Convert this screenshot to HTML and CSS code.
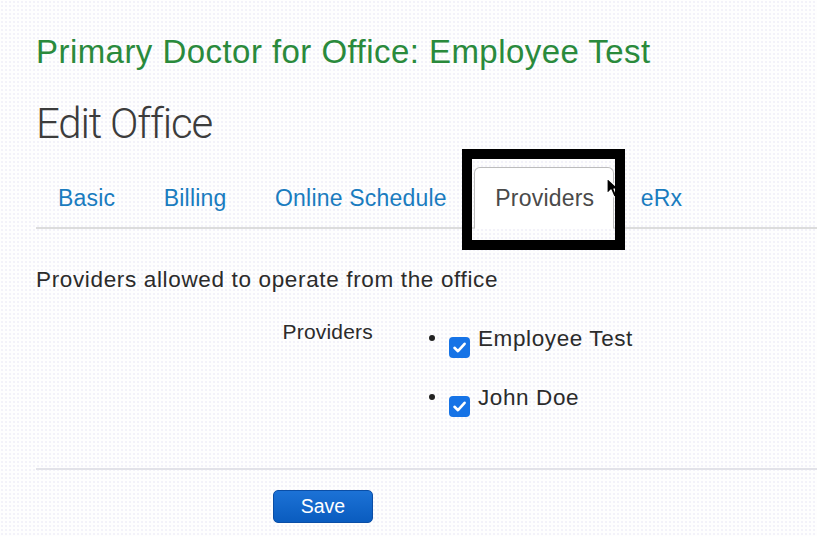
FILE: index.html
```html
<!DOCTYPE html>
<html lang="en">
<head>
<meta charset="utf-8">
<title>Edit Office</title>
<link rel="stylesheet" href="styles.css">
</head>
<body>
<div class="page">
  <h1 class="doctor">Primary Doctor for Office: Employee Test</h1>
  <h2 class="title">Edit Office</h2>
  <ul class="tabs">
    <li class="tab"><a href="#">Basic</a></li>
    <li class="tab"><a href="#">Billing</a></li>
    <li class="tab"><a href="#">Online Schedule</a></li>
    <li class="tab active"><a href="#">Providers</a></li>
    <li class="tab"><a href="#">eRx</a></li>
  </ul>
  <p class="intro">Providers allowed to operate from the office</p>
  <div class="form-row">
    <div class="label">Providers</div>
    <ul class="providers">
      <li class="provider"><span class="bullet"></span><span class="check"><svg viewBox="0 0 21 21" width="21" height="21"><path d="M5.5 10.8 L9 14.2 L15.6 6.8" fill="none" stroke="#fff" stroke-width="2.6" stroke-linecap="round" stroke-linejoin="round"/></svg></span>Employee Test</li>
      <li class="provider"><span class="bullet"></span><span class="check"><svg viewBox="0 0 21 21" width="21" height="21"><path d="M5.5 10.8 L9 14.2 L15.6 6.8" fill="none" stroke="#fff" stroke-width="2.6" stroke-linecap="round" stroke-linejoin="round"/></svg></span>John Doe</li>
    </ul>
  </div>
  <div class="divider"></div>
  <div class="actions"><button class="save">Save</button></div>

  <div class="cursor"><svg viewBox="0 0 14 22" width="14" height="22"><path d="M1 1 L1 17 L5 13 L8 20 L11 19 L8 12 L13 12 Z" fill="#000" stroke="#fff" stroke-width="1.2" stroke-linejoin="round"/></svg></div>
  <div class="highlight"></div>
</div>
</body>
</html>
```
FILE: styles.css
```css
html, body {
  margin: 0;
  padding: 0;
}
body {
  background-color: #fefefe;
  background-image: radial-gradient(circle, #ecebf6 0.6px, transparent 0.9px);
  background-size: 4px 4px;
  font-family: "Liberation Sans", Arial, Helvetica, sans-serif;
  color: #333;
}
.page {
  position: relative;
  width: 817px;
  height: 536px;
  overflow: hidden;
  padding-left: 36px;
  box-sizing: border-box;
}
.doctor {
  margin: 33px 0 0;
  font-size: 33px;
  line-height: 38px;
  font-weight: normal;
  color: #2a8a3c;
  letter-spacing: 0.45px;
}
.title {
  margin: 29px 0 0;
  font-family: Roboto, "Liberation Sans", sans-serif;
  font-weight: 300;
  font-size: 42px;
  line-height: 48px;
  color: #3c3c3c;
  letter-spacing: -1.2px;
}
.tabs {
  list-style: none;
  margin: 19px 0 0;
  padding: 0;
  display: flex;
  border-bottom: 2px solid #dcdcdc;
}
.tab {
  margin: 0 4.5px -2px 0;
}
.tab a {
  display: block;
  padding: 17px 21px 16px;
  font-size: 23px;
  line-height: 27px;
  letter-spacing: 0.2px;
  color: #1a7cbf;
  text-decoration: none;
  border: 1px solid transparent;
  border-radius: 6px 6px 0 0;
}
.tab.active {
  margin-left: 1px;
}
.tab.active a {
  padding-left: 20px;
  padding-right: 19px;
  color: #4a4a4a;
  background: #ffffff;
  border-color: #bdbdbd #bdbdbd transparent;
}
.intro {
  margin: 38px 0 0;
  font-size: 22.5px;
  line-height: 26px;
  letter-spacing: 0.65px;
  color: #2b2b2b;
}
.form-row {
  display: grid;
  grid-template-columns: 337px 1fr;
  margin-top: 26px;
}
.label {
  text-align: right;
  font-size: 21px;
  line-height: 26px;
  letter-spacing: 0.2px;
  color: #2b2b2b;
}
.providers {
  list-style: none;
  margin: 7px 0 0;
  padding: 0 0 0 56px;
}
.provider {
  font-size: 22.5px;
  line-height: 26px;
  letter-spacing: 0.6px;
  color: #2b2b2b;
  margin-bottom: 27px;
}
.provider:last-child {
  margin-bottom: 0;
}
.bullet {
  display: inline-block;
  width: 6px;
  height: 6px;
  border-radius: 50%;
  background: #222;
  vertical-align: 5px;
  margin-right: 14px;
}
.check {
  display: inline-block;
  width: 21px;
  height: 21px;
  border-radius: 4px;
  background: #1673e6;
  vertical-align: -12px;
  margin-right: 8px;
  letter-spacing: 0;
}
.check svg {
  display: block;
}
.divider {
  margin-top: 51px;
  border-top: 2px solid #e2e2e8;
}
.actions {
  margin-top: 20px;
  padding-left: 237px;
}
.save {
  width: 100px;
  height: 33px;
  border: 1px solid #0a4ea6;
  border-radius: 5px;
  background: linear-gradient(#1c72d6, #0a5cbf);
  color: #fff;
  font-family: "Liberation Sans", Arial, sans-serif;
  font-size: 19.5px;
  padding: 0;
}
.highlight {
  position: absolute;
  left: 462px;
  top: 149px;
  width: 163px;
  height: 101px;
  box-sizing: border-box;
  border: 10px solid #000;
}
.cursor {
  position: absolute;
  left: 606px;
  top: 177px;
  width: 14px;
  height: 22px;
}
.cursor svg {
  display: block;
}
```
